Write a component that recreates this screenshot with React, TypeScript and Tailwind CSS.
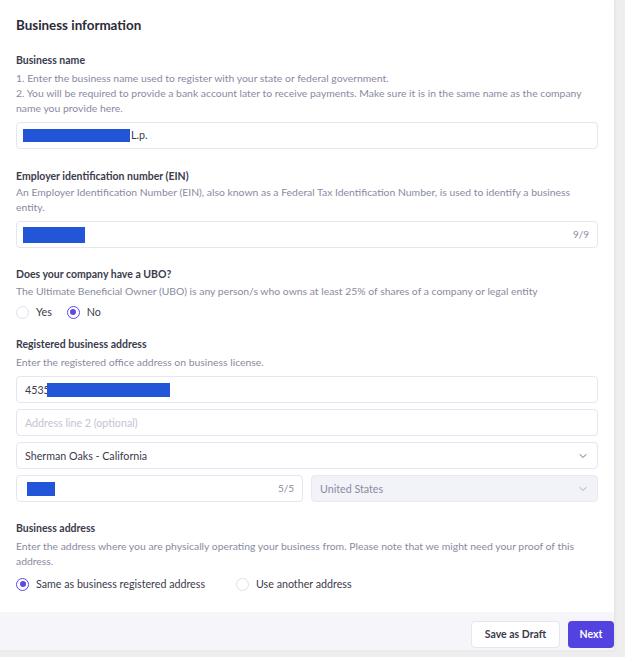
import { ChevronDown } from 'lucide-react';

function Radio({ checked, label }: { checked?: boolean; label: string }) {
  return (
    <label className="flex items-center gap-[7px]">
      <span
        className={`flex h-[13px] w-[13px] items-center justify-center rounded-full border bg-white ${
          checked ? 'border-[#5b4ae6]' : 'border-[#dfe0ec]'
        }`}
      >
        {checked && <span className="h-[6px] w-[6px] rounded-full bg-[#5b4ae6]" />}
      </span>
      <span className="text-[10.7px] text-[#3b3b4b]">{label}</span>
    </label>
  );
}

function Field({ children, className = '' }: { children?: React.ReactNode; className?: string }) {
  return (
    <div
      className={`flex h-[27px] items-center rounded-[4px] border border-[#e4e6f0] px-[8px] text-[10.7px] text-[#3b3b4b] ${className}`}
    >
      {children}
    </div>
  );
}

function Redact({ w }: { w: string }) {
  return <span className={`inline-block h-[13px] bg-[#2355d8] ${w}`} />;
}

export default function App() {
  return (
    <div
      className="flex h-[657px] w-[625px] flex-col bg-[#eeeeef]"
      style={{ fontFamily: 'Lato, "Noto Sans", sans-serif' }}
    >
      <div className="flex w-[614px] flex-col bg-white shadow-[1px_0_3px_rgba(0,0,0,0.06)]">
        <div className="px-[16px] pt-[16px] pb-[20px]">
          <h1 className="text-[13.4px] font-bold leading-[18px] text-[#2b2b38]">Business information</h1>

          {/* Business name */}
          <div className="mt-[19px]">
            <div className="text-[10.5px] font-bold leading-[15px] text-[#3b3b4b]">Business name</div>
            <div className="mt-[3px] text-[10.4px] leading-[15px] text-[#8a8aa1]">
              <p>1. Enter the business name used to register with your state or federal government.</p>
              <p>
                2. You will be required to provide a bank account later to receive payments. Make sure it is in the same
                name as the company name you provide here.
              </p>
            </div>
            <Field className="mt-[6px] w-[582px]">
              <Redact w="w-[107px] -ml-[2px]" />
              <span className="ml-[1px]">L.p.</span>
            </Field>
          </div>

          {/* EIN */}
          <div className="mt-[20px]">
            <div className="text-[10.5px] font-bold leading-[15px] text-[#3b3b4b]">
              Employer identification number (EIN)
            </div>
            <p className="mt-[1px] text-[10.4px] leading-[15px] text-[#8a8aa1]">
              An Employer Identification Number (EIN), also known as a Federal Tax Identification Number, is used to
              identify a business entity.
            </p>
            <Field className="mt-[6px] w-[582px] justify-between">
              <Redact w="w-[62px] -ml-[2px] h-[16px]" />
              <span className="text-[10px] text-[#8a8aa1]">9/9</span>
            </Field>
          </div>

          {/* UBO */}
          <div className="mt-[19px]">
            <div className="text-[10.5px] font-bold leading-[15px] text-[#3b3b4b]">Does your company have a UBO?</div>
            <p className="mt-[2px] text-[10.4px] leading-[15px] text-[#8a8aa1]">
              The Ultimate Beneficial Owner (UBO) is any person/s who owns at least 25% of shares of a company or legal
              entity
            </p>
            <div className="mt-[5px] flex gap-[15px]">
              <Radio label="Yes" />
              <Radio checked label="No" />
            </div>
          </div>

          {/* Registered address */}
          <div className="mt-[17px]">
            <div className="text-[10.5px] font-bold leading-[15px] text-[#3b3b4b]">Registered business address</div>
            <p className="mt-[3px] text-[10.4px] leading-[15px] text-[#8a8aa1]">
              Enter the registered office address on business license.
            </p>
            <div className="mt-[6px] flex w-[582px] flex-col gap-[6px]">
              <Field>
                <span>4535</span>
                <Redact w="w-[123px] -ml-[3px] h-[14px]" />
              </Field>
              <Field>
                <span className="text-[#c3c4d4]">Address line 2 (optional)</span>
              </Field>
              <Field className="justify-between">
                <span>Sherman Oaks - California</span>
                <ChevronDown className="h-[12px] w-[12px] text-[#6b6b80]" strokeWidth={2} />
              </Field>
              <div className="flex gap-[8px]">
                <Field className="w-[287px] justify-between">
                  <Redact w="w-[28px] h-[14px] ml-[2px]" />
                  <span className="text-[10px] text-[#8a8aa1]">5/5</span>
                </Field>
                <Field className="flex-1 justify-between border-[#e8e9f2] bg-[#f2f3f8]">
                  <span className="text-[#8a8aa1]">United States</span>
                  <ChevronDown className="h-[12px] w-[12px] text-[#a9aabb]" strokeWidth={2} />
                </Field>
              </div>
            </div>
          </div>

          {/* Business address */}
          <div className="mt-[19px]">
            <div className="text-[10.5px] font-bold leading-[15px] text-[#3b3b4b]">Business address</div>
            <p className="mt-[3px] text-[10.4px] leading-[15px] text-[#8a8aa1]">
              Enter the address where you are physically operating your business from. Please note that we might need
              your proof of this address.
            </p>
            <div className="mt-[7px] flex gap-[31px]">
              <Radio checked label="Same as business registered address" />
              <Radio label="Use another address" />
            </div>
          </div>
        </div>

        {/* Footer */}
        <div className="flex h-[38px] items-end justify-end gap-[8px] bg-[#f5f5fa] pb-[2px]">
          <button className="h-[27px] w-[89px] rounded-[4px] border border-[#e4e6f0] bg-white text-[10.5px] font-bold text-[#3b3b4b]">
            Save as Draft
          </button>
          <button className="h-[27px] w-[46px] rounded-[4px] bg-[#5341e0] text-[10.5px] font-bold text-white">
            Next
          </button>
        </div>
      </div>
    </div>
  );
}
